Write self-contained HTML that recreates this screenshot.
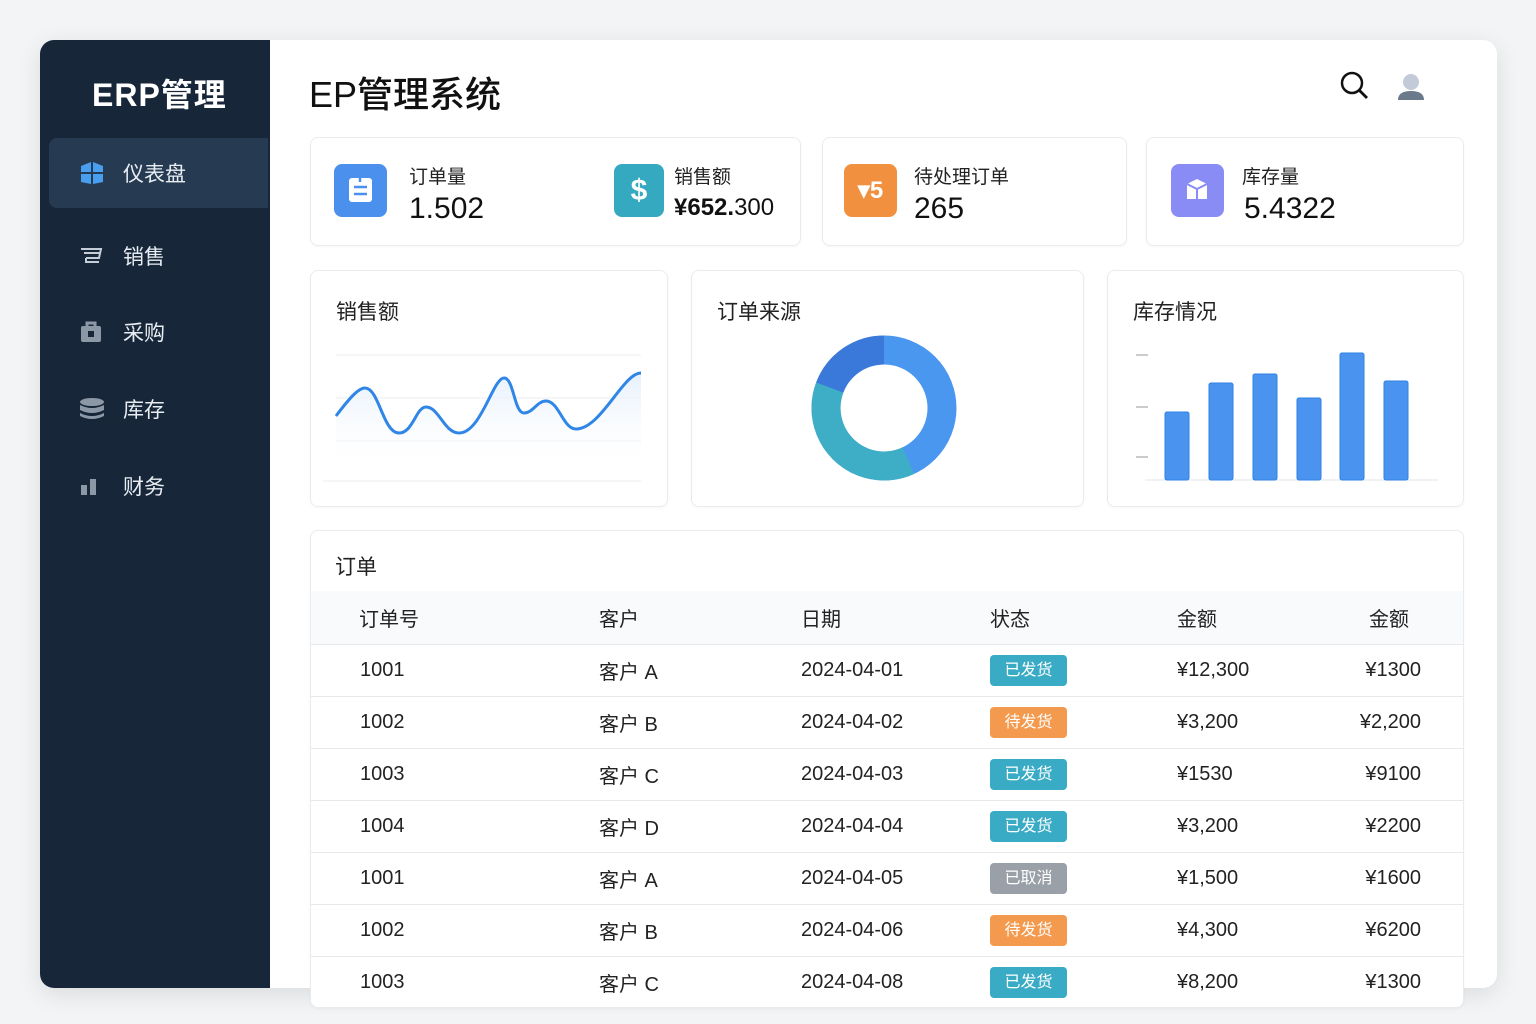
<!DOCTYPE html>
<html><head><meta charset="utf-8"><style>
*{box-sizing:border-box;margin:0;padding:0}
body{width:1536px;height:1024px;background:#f2f4f6;font-family:"Liberation Sans","Noto Sans CJK SC",sans-serif;color:#111;position:relative;overflow:hidden}
.frame{position:absolute;left:40px;top:40px;width:1457px;height:948px;background:#fff;border-radius:14px;box-shadow:0 6px 24px rgba(0,0,0,.10);overflow:hidden}
.side{position:absolute;left:0;top:0;width:230px;height:948px;background:#172638}
.logo{position:absolute;left:52px;top:30px;color:#fff;font-size:32px;font-weight:bold;letter-spacing:1px}
.nav{position:absolute;left:9px;width:219px;height:70px;display:flex;align-items:center;color:#e8edf3;font-size:21px}
.nav.act{background:#263b51;border-radius:8px 0 0 8px}
.nav svg{position:absolute;left:30px}
.nav span{position:absolute;left:74px}
.title{position:absolute;left:309px;top:66px;font-size:36px;font-weight:500;color:#111}
.card{position:absolute;background:#fff;border:1px solid #e9ecef;border-radius:8px;box-shadow:0 1px 3px rgba(0,0,0,.04)}
.ic{position:absolute;width:53px;height:53px;border-radius:8px}
.lbl{position:absolute;font-size:19px;color:#222}
.val{position:absolute;font-size:30px;color:#111;font-weight:500}
.ctitle{position:absolute;left:25px;top:25px;font-size:21px;color:#222}
table{position:absolute;left:0;top:60px;width:1154px;border-collapse:collapse;font-size:20px}
th{height:53px;background:#f8fafc;font-weight:normal;text-align:left;color:#222}
td{height:52px;border-top:1px solid #e6e9ec;color:#222}
.b{display:inline-block;width:77px;height:31px;line-height:31px;text-align:center;color:#fff;border-radius:4px;font-size:16px}
.t{background:#3aabc4}.o{background:#f39a4e}.g{background:#9aa0a8}
</style></head><body>
<div class="frame">
 <div class="side">
  <div class="logo">ERP管理</div>
  <div class="nav act" style="top:98px"><svg width="26" height="26" viewBox="0 0 26 26"><path d="M2 6 L12 2 V12 H2Z M14 2 L24 6 V12 H14Z M2 14 H12 V24 L2 22Z M14 14 H24 V22 L14 24Z" fill="#4a9ef0"/></svg><span>仪表盘</span></div>
  <div class="nav" style="top:181px"><svg width="26" height="24" viewBox="0 0 26 24"><path d="M2 5 H22 L20 14 H7 M5 9 H21 M7 14 L7 18 H20" stroke="#c4cdd8" stroke-width="2" fill="none"/></svg><span>销售</span></div>
  <div class="nav" style="top:257px"><svg width="24" height="24" viewBox="0 0 24 24"><rect x="2" y="6" width="20" height="16" rx="2" fill="#8d98a6"/><path d="M8 6 V3 H16 V6" stroke="#8d98a6" stroke-width="3" fill="none"/><rect x="9" y="11" width="6" height="6" fill="#172638"/></svg><span>采购</span></div>
  <div class="nav" style="top:334px"><svg width="26" height="26" viewBox="0 0 26 26"><ellipse cx="13" cy="6" rx="12" ry="4" fill="#8d98a6"/><path d="M1 9 Q13 15 25 9 V14 Q13 20 1 14Z M1 17 Q13 23 25 17 V20 Q13 26 1 20Z" fill="#8d98a6"/></svg><span>库存</span></div>
  <div class="nav" style="top:411px"><svg width="22" height="22" viewBox="0 0 22 22"><rect x="2" y="10" width="6" height="10" fill="#8d98a6"/><rect x="11" y="4" width="6" height="16" fill="#8d98a6"/></svg><span>财务</span></div>
 </div>
</div>
<div class="title">EP管理系统</div>
<svg style="position:absolute;left:1339px;top:70px" width="32" height="32" viewBox="0 0 32 32"><circle cx="13" cy="13" r="10" stroke="#111" stroke-width="2.5" fill="none"/><path d="M20 20 L28 28" stroke="#111" stroke-width="2.8"/></svg>
<svg style="position:absolute;left:1397px;top:72px" width="28" height="28" viewBox="0 0 28 28"><circle cx="14" cy="10" r="8" fill="#c4cbd8"/><path d="M1 28 Q1 19 14 19 Q27 19 27 28Z" fill="#6b7a8a"/></svg>

<div class="card" style="left:310px;top:137px;width:491px;height:109px">
 <div class="ic" style="left:23px;top:26px;background:#4a90ec"><svg width="53" height="53"><rect x="15" y="14" width="23" height="24" rx="3" fill="#fff"/><path d="M26 14 v4 M20 23 h13 M20 30 h13" stroke="#4a90ec" stroke-width="2.5"/></svg></div>
 <div class="lbl" style="left:98px;top:24px">订单量</div>
 <div class="val" style="left:98px;top:54px">1.502</div>
 <div class="ic" style="left:303px;top:26px;width:50px;background:#35a9c0"><div style="color:#fff;font-size:30px;font-weight:bold;text-align:center;line-height:53px">$</div></div>
 <div class="lbl" style="left:363px;top:24px">销售额</div>
 <div class="val" style="left:363px;top:56px;font-size:24px"><b>¥652.</b>300</div>
</div>
<div class="card" style="left:822px;top:137px;width:305px;height:109px">
 <div class="ic" style="left:21px;top:26px;background:#f1913f"><div style="color:#fff;font-size:24px;font-weight:bold;text-align:center;line-height:53px">▾5</div></div>
 <div class="lbl" style="left:91px;top:24px">待处理订单</div>
 <div class="val" style="left:91px;top:54px">265</div>
</div>
<div class="card" style="left:1146px;top:137px;width:318px;height:109px">
 <div class="ic" style="left:24px;top:26px;background:#8a8cf5"><svg width="53" height="53"><path d="M16 20 L26 15 L36 20 V35 H16Z" fill="#fff"/><path d="M16 20 L26 25 L36 20 M26 25 V35" stroke="#8a8cf5" stroke-width="2" fill="none"/></svg></div>
 <div class="lbl" style="left:95px;top:24px">库存量</div>
 <div class="val" style="left:97px;top:54px">5.4322</div>
</div>

<div class="card" style="left:310px;top:270px;width:358px;height:237px">
 <div class="ctitle">销售额</div>
 <svg style="position:absolute;left:0;top:0" width="358" height="237">
  <defs><linearGradient id="gf" x1="0" y1="0" x2="0" y2="1"><stop offset="0" stop-color="#e6f0fc"/><stop offset="1" stop-color="#fff" stop-opacity="0"/></linearGradient></defs>
  <path d="M25 84 H330 M25 127 H330 M25 170 H330 M12 210 H330" stroke="#eceef1" stroke-width="1"/>
  <path d="M25 145 C40 125 48 117 54 117 C68 117 72 162 88 162 C102 162 105 136 115 136 C128 136 133 162 148 162 C170 162 182 107 193 107 C203 107 203 142 213 142 C222 142 226 130 235 130 C248 130 252 158 265 158 C290 158 312 102 330 102 V200 H25Z" fill="url(#gf)"/>
  <path d="M25 145 C40 125 48 117 54 117 C68 117 72 162 88 162 C102 162 105 136 115 136 C128 136 133 162 148 162 C170 162 182 107 193 107 C203 107 203 142 213 142 C222 142 226 130 235 130 C248 130 252 158 265 158 C290 158 312 102 330 102" stroke="#2f86e6" stroke-width="3" fill="none"/>
 </svg>
</div>
<div class="card" style="left:691px;top:270px;width:393px;height:237px">
 <div class="ctitle">订单来源</div>
 <svg style="position:absolute;left:0;top:0" width="393" height="237">
  <g transform="rotate(-90 192 137)">
  <circle cx="192" cy="137" r="58" fill="none" stroke="#4a97f0" stroke-width="29"/>
  <circle cx="192" cy="137" r="58" fill="none" stroke="#3eaec6" stroke-width="29" stroke-dasharray="137 400" stroke-dashoffset="-157"/>
  <circle cx="192" cy="137" r="58" fill="none" stroke="#3a78da" stroke-width="29" stroke-dasharray="71 400" stroke-dashoffset="-294"/>
  </g>
 </svg>
</div>
<div class="card" style="left:1107px;top:270px;width:357px;height:237px">
 <div class="ctitle">库存情况</div>
 <svg style="position:absolute;left:0;top:0" width="357" height="237">
  <path d="M28 84 H40 M28 136 H40 M28 186 H40" stroke="#bbb" stroke-width="1.5"/>
  <path d="M37 209 H330" stroke="#e3e5e8"/>
  <g fill="#4a94f0" stroke="#2f80e4" stroke-width="1">
   <rect x="57" y="141" width="24" height="68" rx="2"/>
   <rect x="101" y="112" width="24" height="97" rx="2"/>
   <rect x="145" y="103" width="24" height="106" rx="2"/>
   <rect x="189" y="127" width="24" height="82" rx="2"/>
   <rect x="232" y="82" width="24" height="127" rx="2"/>
   <rect x="276" y="110" width="24" height="99" rx="2"/>
  </g>
 </svg>
</div>

<div class="card" style="left:310px;top:530px;width:1154px;height:478px;overflow:hidden">
 <div class="ctitle" style="top:20px;left:24px">订单</div>
 <table>
  <tr><th style="padding-left:48px;width:288px">订单号</th><th style="width:202px">客户</th><th style="width:189px">日期</th><th style="width:187px">状态</th><th style="width:160px">金额</th><th style="text-align:right;padding-right:56px">金额</th></tr>
  <tr><td style="padding-left:49px">1001</td><td>客户 A</td><td>2024-04-01</td><td><span class="b t">已发货</span></td><td>¥12,300</td><td style="text-align:right;padding-right:44px">¥1300</td></tr>
  <tr><td style="padding-left:49px">1002</td><td>客户 B</td><td>2024-04-02</td><td><span class="b o">待发货</span></td><td>¥3,200</td><td style="text-align:right;padding-right:44px">¥2,200</td></tr>
  <tr><td style="padding-left:49px">1003</td><td>客户 C</td><td>2024-04-03</td><td><span class="b t">已发货</span></td><td>¥1530</td><td style="text-align:right;padding-right:44px">¥9100</td></tr>
  <tr><td style="padding-left:49px">1004</td><td>客户 D</td><td>2024-04-04</td><td><span class="b t">已发货</span></td><td>¥3,200</td><td style="text-align:right;padding-right:44px">¥2200</td></tr>
  <tr><td style="padding-left:49px">1001</td><td>客户 A</td><td>2024-04-05</td><td><span class="b g">已取消</span></td><td>¥1,500</td><td style="text-align:right;padding-right:44px">¥1600</td></tr>
  <tr><td style="padding-left:49px">1002</td><td>客户 B</td><td>2024-04-06</td><td><span class="b o">待发货</span></td><td>¥4,300</td><td style="text-align:right;padding-right:44px">¥6200</td></tr>
  <tr><td style="padding-left:49px">1003</td><td>客户 C</td><td>2024-04-08</td><td><span class="b t">已发货</span></td><td>¥8,200</td><td style="text-align:right;padding-right:44px">¥1300</td></tr>
 </table>
</div>
</body></html>
